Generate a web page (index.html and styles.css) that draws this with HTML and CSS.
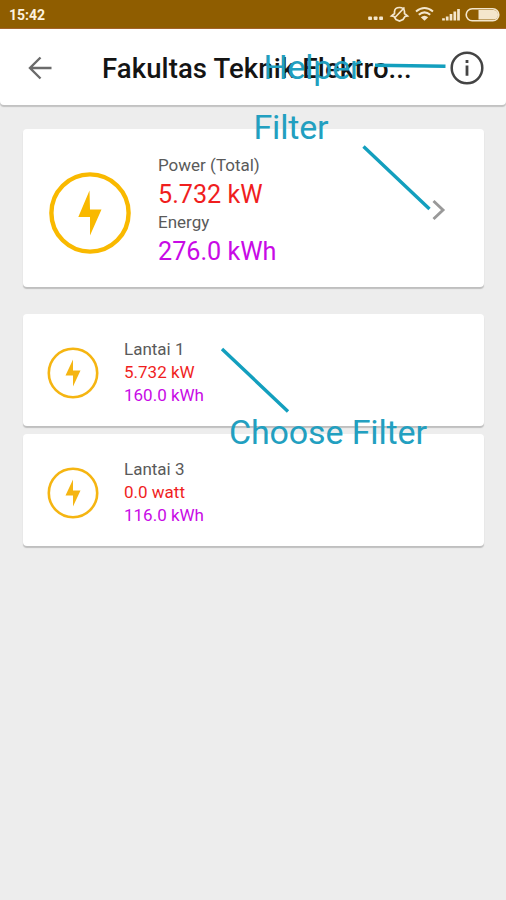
FILE: index.html
```html
<!DOCTYPE html>
<html lang="id">
<head>
<meta charset="utf-8">
<title>Fakultas Teknik Elektro</title>
<link rel="stylesheet" href="styles.css">
</head>
<body>
<div class="screen">
  <header class="status">
    <span class="time">15:42</span>
    <svg class="status-icons" width="134" height="20" viewBox="0 0 134 20" fill="none" stroke="#f4e6cc">
      <g fill="#f4e6cc" stroke="none">
        <rect x="1.200" y="12.500" width="3.800" height="3.500" rx=".8"/><rect x="6.700" y="12.500" width="3.800" height="3.500" rx=".8"/><rect x="12.200" y="12.500" width="3.800" height="3.500" rx=".8"/>
      </g>
      <path d="M24.500 12 L27.500 9.500 V7.500 Q27.800 3.500 32.500 3.500 Q37.200 3.500 37.500 7.500 V9.500 L40.500 12 L38 12.500 L36 15.500 L32.500 17 L29 15.500 L27 12.500Z M27.500 14 L37.500 3.500" stroke-width="1.700"/>
      <path d="M49 7.500 Q57.500 .5 66 7.500 M51.800 10.800 Q57.500 6 63.200 10.800" stroke-width="2"/>
      <path d="M53.800 13.300 Q57.500 10 61.200 13.300 L57.500 16.700Z" fill="#f4e6cc" stroke="none"/>
      <path d="M76.500 16.500 V14.300 M80.200 16.500 V12.500 M84 16.500 V10 M87.800 16.500 V7.500 M91.500 16.500 V5" stroke-width="2.700"/>
      <rect x="99.200" y="4.700" width="32.600" height="12" rx="6" stroke-width="1.600"/>
      <path d="M111.500 6 H127 Q131 6.500 131 10.700 Q131 15 127 15.500 H111.500Z" fill="#f4e6cc" stroke="none"/>
    </svg>
  </header>
  <nav class="toolbar">
    <svg class="back" width="24" height="24" viewBox="0 0 24 24" fill="none" stroke="#6b6b6b" stroke-width="2.400"><path d="M23.500 12 H2 M12.500 1.500 L2 12 L12.500 22.500"/></svg>
    <h1 class="title">Fakultas Teknik Elektro...</h1>
    <svg class="info" width="34" height="34" viewBox="0 0 34 34" fill="none" stroke="#444" stroke-width="2.500"><circle cx="17" cy="17" r="15.300"/><path d="M17 14.500 V24.800 M17 9 V12" stroke-width="2.800"/></svg>
  </nav>
  <main class="content">
    <section class="card total">
      <svg class="bolt bolt-large" viewBox="0 0 82 82"><circle cx="41" cy="41" r="38.600" fill="none" stroke="currentColor" stroke-width="4.400"/><path d="M40.500 18.500 L29.300 45 H41 V63.500 L52.500 37.500 H41Z" fill="currentColor"/></svg>
      <div class="readings">
        <span class="label">Power (Total)</span>
        <span class="power">5.732 kW</span>
        <span class="label">Energy</span>
        <span class="energy">276.0 kWh</span>
      </div>
      <svg class="chevron" width="14" height="22" viewBox="0 0 14 22" fill="none" stroke="#999" stroke-width="2.900"><path d="M1.500 2 L11 11 L1.500 20"/></svg>
    </section>
    <section class="card floor">
      <svg class="bolt" viewBox="0 0 52 52"><circle cx="26" cy="26" r="24.200" fill="none" stroke="currentColor" stroke-width="2.600"/><path d="M26 12.500 L18.500 28.500 H26 V39.500 L33.500 23.500 H26Z" fill="currentColor"/></svg>
      <div class="readings">
        <span class="label">Lantai 1</span>
        <span class="power">5.732 kW</span>
        <span class="energy">160.0 kWh</span>
      </div>
    </section>
    <section class="card floor">
      <svg class="bolt" viewBox="0 0 52 52"><circle cx="26" cy="26" r="24.200" fill="none" stroke="currentColor" stroke-width="2.600"/><path d="M26 12.500 L18.500 28.500 H26 V39.500 L33.500 23.500 H26Z" fill="currentColor"/></svg>
      <div class="readings">
        <span class="label">Lantai 3</span>
        <span class="power">0.0 watt</span>
        <span class="energy">116.0 kWh</span>
      </div>
    </section>
  </main>
  <svg class="notes" width="506" height="900" viewBox="0 0 506 900">
    <path d="M375 65.300 L445.500 66.300 M363.500 146.500 L429.500 209 M222 349 L288 411.500" stroke="#139fbe" stroke-width="3.400"/>
    <g fill="#229fc0">
      <text x="263.500" y="78.500" textLength="98">Helper</text>
      <text x="253.500" y="139.300" textLength="75">Filter</text>
      <text x="229" y="443.800" textLength="198">Choose Filter</text>
    </g>
  </svg>
</div>
</body>
</html>
```
FILE: styles.css
```css
* { box-sizing: border-box; }
body { margin: 0; background: #ededed; font-family: Roboto, sans-serif; }
.screen { position: relative; height: 900px; overflow: hidden; }
.status {
  display: flex; align-items: center; justify-content: space-between;
  height: 29px; padding: 0 5px 0 9px; background: #8f5d00;
  border-bottom: 1px solid #a3622a;
}
.time { font-size: 14px; font-weight: 700; color: #fbf1df; line-height: 28px; padding-top: 2px; }
.status-icons { flex: none; }
.toolbar {
  display: flex; align-items: center; height: 76px; padding: 2px 22px 0 28px;
  background: #fff; border-radius: 0 0 4px 4px; box-shadow: 0 2px 1px #c2c2c2;
}
.title {
  margin: 0 0 0 50px; padding-top: 1px; flex: 1; font-size: 27.500px; font-weight: 500;
  color: #141414; white-space: nowrap; letter-spacing: .1px;
}
.back, .info, .chevron, .bolt { flex: none; }
.content { padding: 24px 22px 0 23px; }
.card {
  display: flex; align-items: center; background: #fff;
  border-radius: 4px; box-shadow: 0 2px 1px #bfbfbf;
}
.total { height: 158px; padding: 0 38px 0 26px; margin-bottom: 27px; }
.floor { height: 112px; padding-left: 24px; margin-bottom: 8px; }
.bolt { width: 52px; height: 52px; color: #f5b512; margin-top: 6px; }
.bolt-large { width: 82px; height: 82px; color: #f9b900; margin-top: 10px; }
.readings { display: flex; flex-direction: column; flex: 1; }
.total .readings { margin-left: 27px; padding-top: 2px; }
.floor .readings { margin-left: 25px; padding-top: 5px; font-size: 17px; line-height: 23px; }
.label { color: #5a5a5a; font-size: 17px; }
.total .label { line-height: 27px; }
.total .power, .total .energy { padding-top: 2px; font-size: 25.200px; line-height: 28px; }
.power { color: #f01e1e; }
.energy { color: #c80ae6; }
.chevron { margin-top: 4px; }
.notes { position: absolute; inset: 0; font-size: 34px; }
```
